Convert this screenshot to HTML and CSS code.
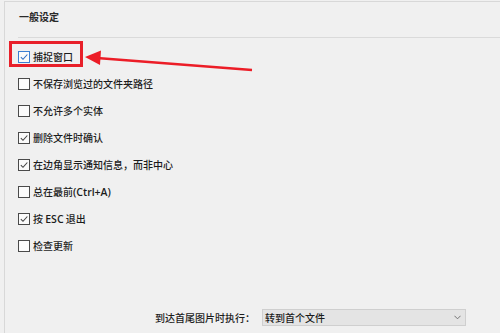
FILE: index.html
```html
<!DOCTYPE html>
<html lang="zh-CN">
<head>
<meta charset="utf-8">
<link rel="stylesheet" href="styles.css">
</head>
<body>
<div class="panel">
  <div class="header">一般设定</div>
  <ul class="options">
    <li class="option"><span class="box box-focus checked"><svg viewBox="0 0 12 12"><path d="M2.2 6.2 L4.8 8.8 L10 3" /></svg></span><span class="label">捕捉窗口</span></li>
    <li class="option"><span class="box"></span><span class="label">不保存浏览过的文件夹路径</span></li>
    <li class="option"><span class="box"></span><span class="label">不允许多个实体</span></li>
    <li class="option"><span class="box checked"><svg viewBox="0 0 12 12"><path d="M2.2 6.2 L4.8 8.8 L10 3" /></svg></span><span class="label">删除文件时确认</span></li>
    <li class="option"><span class="box checked"><svg viewBox="0 0 12 12"><path d="M2.2 6.2 L4.8 8.8 L10 3" /></svg></span><span class="label">在边角显示通知信息，而非中心</span></li>
    <li class="option"><span class="box"></span><span class="label">总在最前<span class="latin">(Ctrl+A)</span></span></li>
    <li class="option"><span class="box checked"><svg viewBox="0 0 12 12"><path d="M2.2 6.2 L4.8 8.8 L10 3" /></svg></span><span class="label">按 <span class="latin">ESC</span> 退出</span></li>
    <li class="option"><span class="box"></span><span class="label">检查更新</span></li>
  </ul>
  <div class="bottom-row">
    <span class="field-label">到达首尾图片时执行：</span>
    <div class="select">
      <span class="select-text">转到首个文件</span>
      <svg class="chev" viewBox="0 0 8 5"><path d="M0.5 0.5 L4 4 L7.5 0.5" /></svg>
    </div>
  </div>
  <div class="annot-box"></div>
  <svg class="annot-arrow" viewBox="0 0 500 333" width="500" height="333">
    <line x1="97" y1="58" x2="252" y2="70" />
    <polygon points="85,57 101,50.5 100,65" />
  </svg>
</div>
</body>
</html>
```
FILE: styles.css
```css
html, body {
  margin: 0;
  padding: 0;
  background: #f0f0f0;
}
body {
  width: 500px;
  height: 333px;
  overflow: hidden;
  font-family: "Noto Sans CJK SC", "Noto Sans", sans-serif;
  font-size: 10px;
  color: #1c1c1c;
}
.panel {
  position: relative;
  margin: 1px 0 0 4px;
  height: 332px;
  border-left: 1px solid #d8d8d8;
  border-top: 1px solid #d8d8d8;
  padding-left: 13px;
  box-sizing: border-box;
}
.header {
  padding-left: 1px;
  border-bottom: 1px solid #dadada;
  box-sizing: border-box;
  height: 36px;
  line-height: 29px;
  font-size: 10px;
  font-weight: 700;
  color: #2a2a2a;
}
.options {
  list-style: none;
  margin: 0;
  padding: 5px 0 0 0;
}
.option {
  height: 27px;
  display: flex;
  align-items: center;
}
.box {
  width: 12px;
  height: 12px;
  box-sizing: border-box;
  border: 1px solid #4a4a4a;
  background: #fbfbfb;
  display: flex;
  align-items: center;
  justify-content: center;
  margin-right: 3px;
}
.box svg {
  width: 10px;
  height: 10px;
  fill: none;
  stroke: #444;
  stroke-width: 1.3;
}
.box-focus {
  border-color: #3c7fd2;
}
.box-focus svg {
  stroke: #2f6fc4;
}
.label {
  line-height: 14px;
  font-weight: 500;
}
.latin {
  font-family: "Open Sans", "Noto Sans", sans-serif;
  font-size: 10.5px;
  font-weight: 600;
}
.bottom-row {
  display: flex;
  align-items: center;
  margin-top: 50px;
  padding-left: 137px;
}
.field-label {
  width: 107px;
  font-weight: 500;
}
.select {
  width: 204px;
  height: 17px;
  box-sizing: border-box;
  border: 1px solid #cfcfcf;
  background: #e4e4e4;
  display: flex;
  align-items: center;
  padding: 0 4px 0 2px;
}
.select-text {
  flex: 1;
  font-weight: 500;
}
.chev {
  width: 7px;
  height: 5px;
  fill: none;
  stroke: #666;
  stroke-width: 1;
}
.annot-box {
  position: absolute;
  left: 4px;
  top: 39px;
  width: 74px;
  height: 26px;
  border: 3px solid #e8202a;
  box-sizing: border-box;
}
.annot-arrow {
  position: absolute;
  left: -5px;
  top: -2px;
  overflow: visible;
}
.annot-arrow line {
  stroke: #ec1d27;
  stroke-width: 2.5;
}
.annot-arrow polygon {
  fill: #ec1d27;
}
```
